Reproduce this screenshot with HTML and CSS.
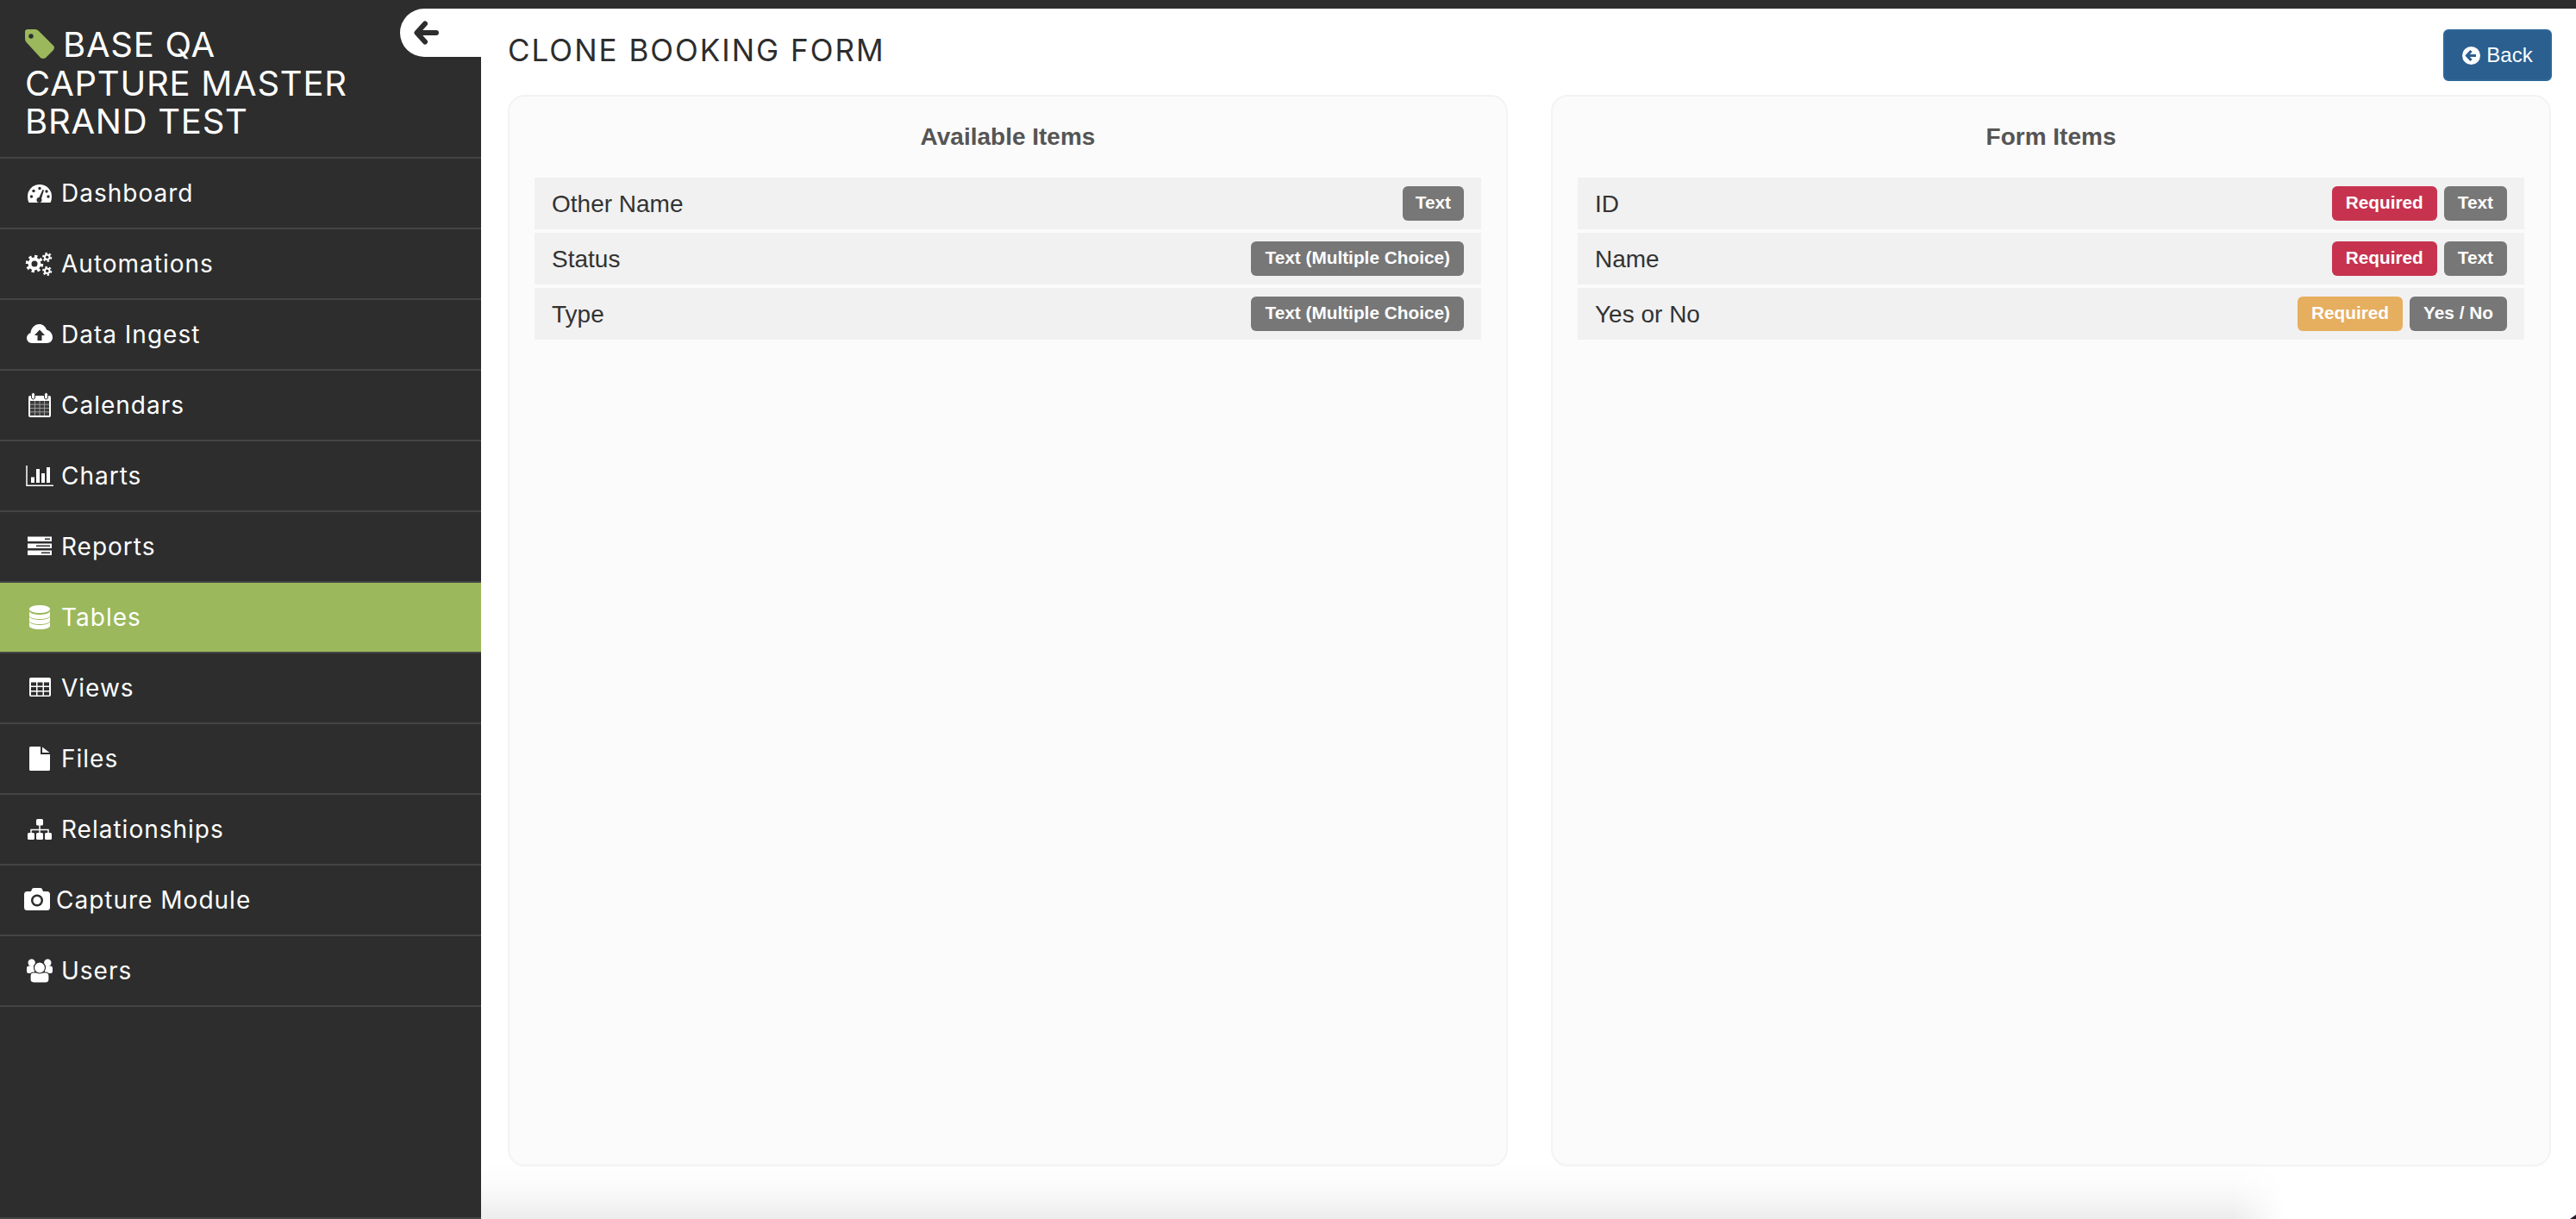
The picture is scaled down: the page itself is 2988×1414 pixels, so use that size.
FILE: index.html
```html
<!DOCTYPE html>
<html lang="en">
<head>
<meta charset="utf-8">
<title>Clone Booking Form</title>
<link rel="stylesheet" href="styles.css">
</head>
<body>
<div class="app">
  <aside class="sidebar">
    <h2 class="brand">
      <svg class="brand-tag" viewBox="0 0 34 34"><path class="tag-fill" d="M3 0H12Q14 0 16 2L33 19Q35 21 33 24L24 33Q21 35 18 33L1.5 15Q0 13.500 0 11V3Q0 0 3 0Z"/><circle class="hole" cx="7" cy="8" r="2.700"/></svg>
      BASE QA<br>CAPTURE MASTER<br>BRAND TEST
    </h2>
    <ul class="nav">
      <li class="nav-item">
        <svg class="icon" viewBox="0 0 32 32"><path class="fill" d="M16 6A14 14 0 0 1 30 20Q30 24 28.500 27H3.500Q2 24 2 20A14 14 0 0 1 16 6Z"/><g class="hole"><circle cx="6.500" cy="20" r="1.700"/><circle cx="9" cy="13.500" r="1.700"/><circle cx="16" cy="10.500" r="1.700"/><circle cx="24" cy="14" r="1.700"/><circle cx="26" cy="20" r="1.700"/><circle cx="15.500" cy="24" r="3"/><path d="M14.500 23L19.500 12L21 12.500L17.500 24Z"/></g></svg>
        <span>Dashboard</span>
      </li>
      <li class="nav-item">
        <svg class="icon" viewBox="0 0 32 32"><g class="gear-big"><circle class="fill" cx="10" cy="16" r="7.500"/><circle class="teeth" cx="10" cy="16" r="8.500" pathLength="16" stroke-dasharray="1 1"/><circle class="hole" cx="10" cy="16" r="3.500"/></g><circle class="fill" cx="24.700" cy="8.300" r="3.800"/><circle class="teeth-sm" cx="24.700" cy="8.300" r="4.600" pathLength="12" stroke-dasharray="1 1"/><circle class="hole" cx="24.700" cy="8.300" r="1.700"/><circle class="fill" cx="24.700" cy="24.300" r="3.800"/><circle class="teeth-sm" cx="24.700" cy="24.300" r="4.600" pathLength="12" stroke-dasharray="1 1"/><circle class="hole" cx="24.700" cy="24.300" r="1.700"/></svg>
        <span>Automations</span>
      </li>
      <li class="nav-item">
        <svg class="icon" viewBox="0 0 32 32"><path class="fill" d="M7 26C3.500 26 1 23.200 1 20C1 17.300 2.800 15 5.500 14.200C6 8.500 10.300 4 15.500 4C19.500 4 22.700 6.500 24 10.500C28 11.500 31 15 31 19.500C31 23.200 28 26 24.500 26Z"/><path class="hole" d="M16 10.500L22 17H18.500V23H13.500V17H10Z"/></svg>
        <span>Data Ingest</span>
      </li>
      <li class="nav-item">
        <svg class="icon" viewBox="0 0 32 32"><rect class="fill" x="3" y="5" width="26" height="25" rx="2"/><rect class="cal-cells" x="5" y="11" width="22" height="17"/><path class="cal-lines" d="M10.500 11V28M16 11V28M21.500 11V28M5 15.200H27M5 19.500H27M5 23.800H27"/><rect class="fill ring" x="6.500" y="1.500" width="4" height="7.500" rx="2"/><rect class="fill ring" x="21.500" y="1.500" width="4" height="7.500" rx="2"/></svg>
        <span>Calendars</span>
      </li>
      <li class="nav-item">
        <svg class="icon" viewBox="0 0 32 32"><path class="axis" d="M1 4V27.300H32"/><path class="fill" d="M6 17.500H10V24H6ZM12 8H16V24H12ZM18 13H22V24H18ZM24 6H28V24H24Z"/></svg>
        <span>Charts</span>
      </li>
      <li class="nav-item">
        <svg class="icon" viewBox="0 0 32 32"><path class="fill" d="M2 4.500H30V10H2ZM2 12.500H30V18H2ZM2 20.500H30V26H2Z"/><path class="hole" d="M22 6.500H28V8H22ZM12 14.500H28V16H12ZM18 22.500H28V24H18Z"/></svg>
        <span>Reports</span>
      </li>
      <li class="nav-item nav-item--active">
        <svg class="icon" viewBox="0 0 32 32"><ellipse class="fill" cx="16" cy="6.500" rx="12" ry="4.500"/><path class="fill" d="M4 9.500C6 12 11 13 16 13S26 12 28 9.500V14C28 16.500 22 18 16 18S4 16.500 4 14Z"/><path class="fill" d="M4 15.500C6 18 11 19 16 19S26 18 28 15.500V20C28 22.500 22 24 16 24S4 22.500 4 20Z"/><path class="fill" d="M4 21.500C6 24 11 25 16 25S26 24 28 21.500V26C28 28.500 22 30 16 30S4 28.500 4 26Z"/></svg>
        <span>Tables</span>
      </li>
      <li class="nav-item">
        <svg class="icon" viewBox="0 0 32 32"><rect class="fill" x="4" y="4" width="25" height="22" rx="2"/><path class="hole" d="M6 9.500H12V13.500H6ZM13.500 9.500H19.500V13.500H13.500ZM21 9.500H27V13.500H21ZM6 15H12V19H6ZM13.500 15H19.500V19H13.500ZM21 15H27V19H21ZM6 20.500H12V24.500H6ZM13.500 20.500H19.500V24.500H13.500ZM21 20.500H27V24.500H21Z"/></svg>
        <span>Views</span>
      </li>
      <li class="nav-item">
        <svg class="icon" viewBox="0 0 32 32"><path class="fill" d="M5.500 2H17V11H28V28.500Q28 30 26.500 30H5.500Q4 30 4 28.500V3.500Q4 2 5.500 2ZM19 2.500L27.500 9H19Z"/></svg>
        <span>Files</span>
      </li>
      <li class="nav-item">
        <svg class="icon" viewBox="0 0 32 32"><rect class="fill" x="12" y="4" width="8" height="7.500" rx="1.500"/><path class="link" d="M16 11V21M6 21V16.500H26V21"/><rect class="fill" x="2" y="20" width="8" height="8" rx="1.500"/><rect class="fill" x="12" y="20" width="8" height="8" rx="1.500"/><rect class="fill" x="22" y="20" width="8" height="8" rx="1.500"/></svg>
        <span>Relationships</span>
      </li>
      <li class="nav-item nav-item--wide">
        <svg class="icon" viewBox="0 0 32 32"><path class="fill" d="M3.500 6H8L9 3.500Q9.500 2 11 2H19Q20.500 2 21 3.500L22 6H26.500Q30 6 30 9.500V24.500Q30 28 26.500 28H3.500Q0 28 0 24.500V9.500Q0 6 3.500 6Z"/><circle class="hole" cx="15" cy="16.500" r="7"/><circle class="fill" cx="15" cy="16.500" r="4.500"/></svg>
        <span>Capture Module</span>
      </li>
      <li class="nav-item">
        <svg class="icon" viewBox="0 0 32 32"><circle class="fill" cx="6.700" cy="6.700" r="4.200"/><circle class="fill" cx="25.300" cy="6.700" r="4.200"/><path class="fill" d="M1 13Q1 10.500 3.500 10.500H10V19H3.500Q1 19 1 16.500ZM31 13Q31 10.500 28.500 10.500H22V19H28.500Q31 19 31 16.500Z"/><path class="user-body" d="M5 26V22Q5 18 9 18H23Q27 18 27 22V26Q27 30 23 30H9Q5 30 5 26Z"/><circle class="user-head" cx="16" cy="12.500" r="6.500"/></svg>
        <span>Users</span>
      </li>
    </ul>
  </aside>

  <button class="collapse" type="button" aria-label="Collapse sidebar">
    <svg class="collapse-arrow" viewBox="0 0 29 28"><path d="M13 3.500L3.500 14L13 24.500M4 14H26"/></svg>
  </button>

  <main class="main">
    <div class="bottom-shadow"></div>
    <header class="page-head">
      <h1 class="page-title">CLONE BOOKING FORM</h1>
      <a class="btn-back">
        <svg class="btn-icon" viewBox="0 0 21 21"><circle class="btn-disc" cx="10.500" cy="10.500" r="10.500"/><path class="btn-arrow" d="M10.500 5L5.500 10.500L10.500 16M6 10.500H16"/></svg>
        Back
      </a>
    </header>
    <section class="panels">
      <div class="panel">
        <h3 class="panel-title">Available Items</h3>
        <div class="row"><span>Other Name</span><div class="badges"><span class="badge badge--text badge--narrow">Text</span></div></div>
        <div class="row"><span>Status</span><div class="badges"><span class="badge badge--text">Text (Multiple Choice)</span></div></div>
        <div class="row"><span>Type</span><div class="badges"><span class="badge badge--text">Text (Multiple Choice)</span></div></div>
      </div>
      <div class="panel">
        <h3 class="panel-title">Form Items</h3>
        <div class="row"><span>ID</span><div class="badges"><span class="badge badge--required">Required</span><span class="badge badge--text">Text</span></div></div>
        <div class="row"><span>Name</span><div class="badges"><span class="badge badge--required">Required</span><span class="badge badge--text">Text</span></div></div>
        <div class="row"><span>Yes or No</span><div class="badges"><span class="badge badge--warning">Required</span><span class="badge badge--text">Yes / No</span></div></div>
      </div>
    </section>
  </main>
  <div class="window-corner"></div>
</div>
</body>
</html>
```
FILE: styles.css
```css
* { box-sizing: border-box; }

html, body {
  margin: 0;
  height: 100%;
  overflow: hidden;
  background: #fff;
}

body {
  font-family: "Liberation Sans", Arial, sans-serif;
  color: #333;
}

.app {
  position: relative;
  display: grid;
  grid-template-columns: 558px 1fr;
  height: 1414px;
  overflow: hidden;
}

/* Sidebar */
.sidebar {
  --hole: #2d2d2d;
  position: relative;
  z-index: 2;
  background: #2d2d2d;
  border-bottom: 2px solid #444;
  color: #fff;
  font-family: Inter, "Liberation Sans", sans-serif;
}

.brand {
  margin: 0;
  height: 182px;
  padding: 30px 0 0 29px;
  font-size: 40px;
  line-height: 44.5px;
  font-weight: 400;
  letter-spacing: 0.75px;
}

.brand-tag {
  width: 34px;
  height: 34px;
  margin-right: -2px;
  vertical-align: -2px;
}

.tag-fill { fill: #9bb85c; }

.nav {
  list-style: none;
  margin: 0;
  padding: 0;
  border-top: 2px solid #444;
}

.nav-item {
  display: flex;
  align-items: center;
  gap: 9px;
  height: 82px;
  padding-left: 30px;
  border-bottom: 2px solid #444;
  font-size: 28px;
  font-weight: 400;
  letter-spacing: 1px;
  color: #fff;
}

.nav-item--active {
  --hole: #9bb85c;
  background: #9bb85c;
  background-clip: padding-box;
}

.nav-item--wide {
  padding-left: 28px;
  gap: 5px;
}

.icon {
  flex: none;
  width: 32px;
  height: 32px;
  overflow: visible;
}

.fill { fill: #fff; }
.hole { fill: var(--hole); }
.ring { stroke: var(--hole); stroke-width: 1; }
.teeth { fill: none; stroke: #fff; stroke-width: 3.4; }
.teeth-sm { fill: none; stroke: #fff; stroke-width: 2; }
.cal-cells { fill: #3c3c3c; }
.cal-lines { fill: none; stroke: #9a9a9a; stroke-width: 1; }
.axis { fill: none; stroke: #fff; stroke-width: 1.500; }
.link { fill: none; stroke: #fff; stroke-width: 1.500; }
.user-body, .user-head { fill: #fff; stroke: var(--hole); stroke-width: 1.200; }

/* Collapse tab */
.collapse {
  position: absolute;
  z-index: 3;
  top: 10px;
  left: 464px;
  width: 94px;
  height: 56px;
  padding: 0 0 0 16px;
  border: 0;
  border-radius: 28px 0 0 28px;
  background: #fff;
  display: flex;
  align-items: center;
}

.collapse-arrow {
  width: 29px;
  height: 28px;
  fill: none;
  stroke: #2d2d2d;
  stroke-width: 6;
  stroke-linecap: round;
  stroke-linejoin: round;
}

/* Main */
.main {
  position: relative;
  display: flex;
  flex-direction: column;
  min-width: 0;
  border-top: 10px solid #2d2d2d;
  padding: 24px 28px 61px 31px;
}

.bottom-shadow {
  position: absolute;
  left: 0;
  bottom: 0;
  width: 2092px;
  height: 70px;
  background: linear-gradient(to bottom,
    rgba(0, 0, 0, 0) 0%,
    rgba(0, 0, 0, 0.012) 40%,
    rgba(0, 0, 0, 0.04) 70%,
    rgba(0, 0, 0, 0.075) 100%);
  -webkit-mask-image: linear-gradient(to right, #000 2032px, transparent 2092px);
  mask-image: linear-gradient(to right, #000 2032px, transparent 2092px);
}

.window-corner {
  position: absolute;
  right: 0;
  bottom: 0;
  width: 7px;
  height: 5px;
  background: #2a1a2e;
  clip-path: polygon(100% 0, 100% 100%, 0 100%);
}

.page-head {
  position: relative;
  display: flex;
  justify-content: space-between;
  align-items: flex-start;
  height: 60px;
  margin-bottom: 16px;
}

.page-title {
  margin: 2px 0 0;
  font-family: Inter, "Liberation Sans", sans-serif;
  font-size: 35px;
  line-height: 44px;
  font-weight: 400;
  color: #2d2d2d;
  letter-spacing: 2px;
}

.btn-back {
  display: flex;
  align-items: center;
  justify-content: center;
  gap: 7px;
  width: 126px;
  height: 60px;
  background: #2a5f8f;
  border: 2px solid #2e6799;
  border-radius: 6px;
  color: #fff;
  font-size: 24px;
}

.btn-icon { width: 21px; height: 21px; }
.btn-disc { fill: #fff; }
.btn-arrow {
  fill: none;
  stroke: #2a5f8f;
  stroke-width: 3.200;
}

.panels {
  position: relative;
  flex: 1;
  display: grid;
  grid-template-columns: 1160px 1160px;
  gap: 50px;
}

.panel {
  padding: 0 29px;
  background: rgba(0, 0, 0, 0.015);
  border: 2px solid #f3f3f3;
  border-radius: 20px;
}

.panel-title {
  margin: 30px 0;
  font-size: 28px;
  line-height: 34px;
  font-weight: 700;
  color: #555;
  text-align: center;
}

.row {
  display: flex;
  align-items: center;
  justify-content: space-between;
  height: 60px;
  margin-bottom: 4px;
  padding: 0 20px;
  background: #f1f1f1;
  font-size: 28px;
  line-height: 34px;
  color: #333;
}

.row > span { padding-top: 1px; }

.badges {
  display: flex;
  gap: 8px;
}

.badge {
  display: block;
  height: 40px;
  padding: 0 16px;
  border-radius: 6px;
  color: #fff;
  font-size: 20.8px;
  font-weight: 700;
  line-height: 37px;
}

.badge--narrow { padding: 0 15px; }
.badge--text { background: #777; }
.badge--required { background: #c7334f; }
.badge--warning { background: #e6ae5f; }
```
